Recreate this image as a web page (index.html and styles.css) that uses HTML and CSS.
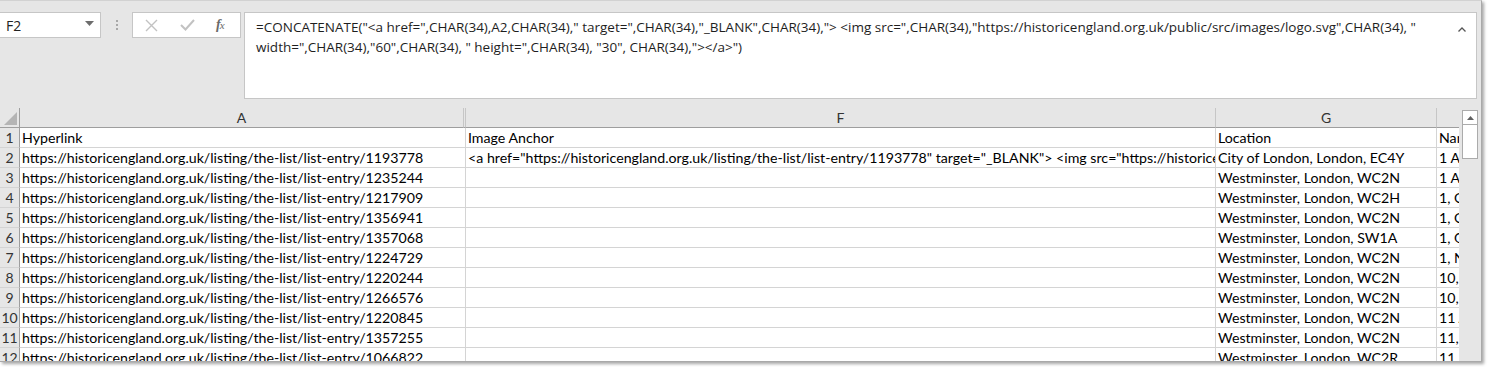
FILE: index.html
```html
<!DOCTYPE html>
<html>
<head>
<meta charset="utf-8">
<link rel="stylesheet" href="styles.css">
</head>
<body>
<div class="window">
  <div class="toolbar">
    <div class="namebox">
      <span class="name">F2</span>
      <svg class="nb-caret" width="9" height="6" viewBox="0 0 9 6"><path d="M0 0h9L4.5 5z" fill="#6d6d6d"/></svg>
    </div>
    <div class="grip"><i></i><i></i><i></i></div>
    <div class="fbuttons">
      <svg class="fb-x" width="13" height="13" viewBox="0 0 13 13"><path d="M1 1l11 11M12 1L1 12" stroke="#c2c2c2" stroke-width="1.4" fill="none"/></svg>
      <svg class="fb-ok" width="15" height="12" viewBox="0 0 15 12"><path d="M1 6l4.5 4.5L14 1" stroke="#c2c2c2" stroke-width="2" fill="none"/></svg>
      <span class="fx"><i>f</i><span>x</span></span>
    </div>
    <div class="formula">
      <div class="ftext">=CONCATENATE("&lt;a href=",CHAR(34),A2,CHAR(34)," target=",CHAR(34),"_BLANK",CHAR(34),"&gt; &lt;img src=",CHAR(34),"https://historicengland.org.uk/public/src/images/logo.svg",CHAR(34), "<br>width=",CHAR(34),"60",CHAR(34), " height=",CHAR(34), "30", CHAR(34),"&gt;&lt;/a&gt;")</div>
      <svg class="f-up" width="8" height="5" viewBox="0 0 8 5"><path d="M0.5 4.5L4 1l3.5 3.5" stroke="#555" stroke-width="1.3" fill="none"/></svg>
    </div>
  </div>
  <div class="sheet">
    <div class="grid">
      <div class="row hdr">
        <div class="cell rh corner"><svg width="13" height="13" viewBox="0 0 13 13"><path d="M13 0V13H0z" fill="#b4b4b4"/></svg></div>
        <div class="cell ca-h">A</div>
        <div class="cell hid"></div>
        <div class="cell cf">F</div>
        <div class="cell cg">G</div>
        <div class="cell ch"></div>
      </div>
      <div class="row"><div class="cell rh">1</div><div class="cell ca">Hyperlink</div><div class="cell cf">Image Anchor</div><div class="cell cg">Location</div><div class="cell ch">Name</div></div>
      <div class="row"><div class="cell rh">2</div><div class="cell ca">https://historicengland.org.uk/listing/the-list/list-entry/1193778</div><div class="cell cf">&lt;a href="https://historicengland.org.uk/listing/the-list/list-entry/1193778" target="_BLANK"&gt; &lt;img src="https://historicengland.org.uk/public/src/images/logo.svg"</div><div class="cell cg">City of London, London, EC4Y</div><div class="cell ch">1 A</div></div>
      <div class="row"><div class="cell rh">3</div><div class="cell ca">https://historicengland.org.uk/listing/the-list/list-entry/1235244</div><div class="cell cf"></div><div class="cell cg">Westminster, London, WC2N</div><div class="cell ch">1 A</div></div>
      <div class="row"><div class="cell rh">4</div><div class="cell ca">https://historicengland.org.uk/listing/the-list/list-entry/1217909</div><div class="cell cf"></div><div class="cell cg">Westminster, London, WC2H</div><div class="cell ch">1, C</div></div>
      <div class="row"><div class="cell rh">5</div><div class="cell ca">https://historicengland.org.uk/listing/the-list/list-entry/1356941</div><div class="cell cf"></div><div class="cell cg">Westminster, London, WC2N</div><div class="cell ch">1, C</div></div>
      <div class="row"><div class="cell rh">6</div><div class="cell ca">https://historicengland.org.uk/listing/the-list/list-entry/1357068</div><div class="cell cf"></div><div class="cell cg">Westminster, London, SW1A</div><div class="cell ch">1, G</div></div>
      <div class="row"><div class="cell rh">7</div><div class="cell ca">https://historicengland.org.uk/listing/the-list/list-entry/1224729</div><div class="cell cf"></div><div class="cell cg">Westminster, London, WC2N</div><div class="cell ch">1, N</div></div>
      <div class="row"><div class="cell rh">8</div><div class="cell ca">https://historicengland.org.uk/listing/the-list/list-entry/1220244</div><div class="cell cf"></div><div class="cell cg">Westminster, London, WC2N</div><div class="cell ch">10,</div></div>
      <div class="row"><div class="cell rh">9</div><div class="cell ca">https://historicengland.org.uk/listing/the-list/list-entry/1266576</div><div class="cell cf"></div><div class="cell cg">Westminster, London, WC2N</div><div class="cell ch">10,</div></div>
      <div class="row"><div class="cell rh">10</div><div class="cell ca">https://historicengland.org.uk/listing/the-list/list-entry/1220845</div><div class="cell cf"></div><div class="cell cg">Westminster, London, WC2N</div><div class="cell ch">11 A</div></div>
      <div class="row"><div class="cell rh">11</div><div class="cell ca">https://historicengland.org.uk/listing/the-list/list-entry/1357255</div><div class="cell cf"></div><div class="cell cg">Westminster, London, WC2N</div><div class="cell ch">11,</div></div>
      <div class="row"><div class="cell rh">12</div><div class="cell ca">https://historicengland.org.uk/listing/the-list/list-entry/1066822</div><div class="cell cf"></div><div class="cell cg">Westminster, London, WC2R</div><div class="cell ch">11,</div></div>
    </div>
    <div class="vscroll">
      <div class="sb-up"><svg width="7" height="4" viewBox="0 0 7 4"><path d="M0 4L3.5 0 7 4z" fill="#606060"/></svg></div>
      <div class="sb-thumb"></div>
    </div>
  </div>
</div>
</body>
</html>
```

FILE: styles.css
```css
* { box-sizing: border-box; }
html, body { margin: 0; padding: 0; background: #ffffff; }
body { width: 1488px; height: 367px; overflow: hidden; }

.window {
  width: 1482px;
  height: 362px;
  background: #e6e6e6;
  border-top: 1px solid #d2d2d2;
  border-right: 1px solid #a9a9a9;
  border-bottom: 1px solid #a9a9a9;
  box-shadow: 2px 2px 3px rgba(0,0,0,0.35);
  overflow: hidden;
  display: flex;
  flex-direction: column;
}

.toolbar {
  height: 107px;
  flex: none;
  display: flex;
  align-items: flex-start;
  padding-top: 11px;
}

.namebox {
  width: 101px;
  height: 26px;
  background: #fff;
  border: 1px solid #c6c6c6;
  border-left: none;
  display: flex;
  align-items: center;
  justify-content: space-between;
  padding: 0 6px 0 6px;
  font-family: "Open Sans", "Noto Sans", sans-serif;
  font-size: 14px;
  color: #222;
}
.nb-caret { margin-top: -2px; }

.grip {
  width: 31px;
  height: 26px;
  display: flex;
  flex-direction: column;
  align-items: center;
  justify-content: center;
  gap: 2px;
}
.grip i { display: block; width: 2px; height: 2px; background: #a8a8a8; }

.fbuttons {
  width: 109px;
  height: 26px;
  background: #fff;
  border: 1px solid #c6c6c6;
  display: flex;
  align-items: center;
  padding-left: 12px;
}
.fb-x { margin-right: 22px; }
.fb-ok { margin-right: 21px; }
.fx {
  font-family: "Liberation Serif", serif;
  font-size: 14px;
  color: #6a6a6a;
  font-weight: bold;
  letter-spacing: -1px;
}
.fx i { font-style: italic; }
.fx span { font-size: 11px; font-style: italic; font-weight: normal; }

.formula {
  margin-left: 3px;
  width: 1233px;
  height: 87px;
  background: #fff;
  border: 1px solid #c6c6c6;
  display: flex;
  align-items: flex-start;
  justify-content: space-between;
  padding: 4px 10px 0 11px;
}
.ftext {
  font-family: "Open Sans", "Noto Sans", sans-serif;
  font-size: 13.5px;
  line-height: 20px;
  color: #1e1e1e;
  white-space: nowrap;
}
.f-up { margin-top: 10px; }

.sheet {
  flex: 1;
  display: flex;
  overflow: hidden;
}

.grid {
  width: 1459px;
  background: #fff;
  overflow: hidden;
}

.row {
  display: flex;
  height: 20px;
}

.cell {
  height: 20px;
  border-right: 1px solid #d4d4d4;
  border-bottom: 1px solid #d4d4d4;
  font-family: "Lato", "Liberation Sans", sans-serif;
  font-size: 14.2px;
  line-height: 20px;
  color: #000;
  padding-left: 2px;
  white-space: nowrap;
  overflow: hidden;
  flex: none;
}

.rh {
  width: 20px;
  background: #e6e6e6;
  border-right: 1px solid #9e9e9e;
  border-bottom: 1px solid #d4d4d4;
  color: #333;
  padding: 0;
  text-align: center;
  font-size: 14px;
}
.ca { width: 446px; }
.cf { width: 750px; }
.cg { width: 221px; }
.ch { width: 22px; border-right: none; }

.hdr .cell {
  background: #e6e6e6;
  border-bottom: 1px solid #9e9e9e;
  border-right: 1px solid #c6c6c6;
  text-align: center;
  color: #333;
  padding: 0;
  font-size: 14px;
}
.hdr .rh { border-right: 1px solid #9e9e9e; }
.hdr .ca-h { width: 444px; }
.hdr .hid { width: 2px; }
.hdr .cf { width: 750px; }
.hdr .ch { border-right: none; }
.corner {
  display: flex;
  align-items: flex-end;
  justify-content: flex-end;
  padding: 0 2px 2px 0 !important;
}

.vscroll {
  flex: 1;
  background: #e6e6e6;
  padding: 2px 0 0 3px;
}
.sb-up {
  width: 16px;
  height: 15px;
  background: #fff;
  border: 1px solid #ababab;
  display: flex;
  align-items: center;
  justify-content: center;
}
.sb-thumb {
  width: 16px;
  height: 34px;
  background: #fff;
  border: 1px solid #ababab;
  border-top: none;
}
```
